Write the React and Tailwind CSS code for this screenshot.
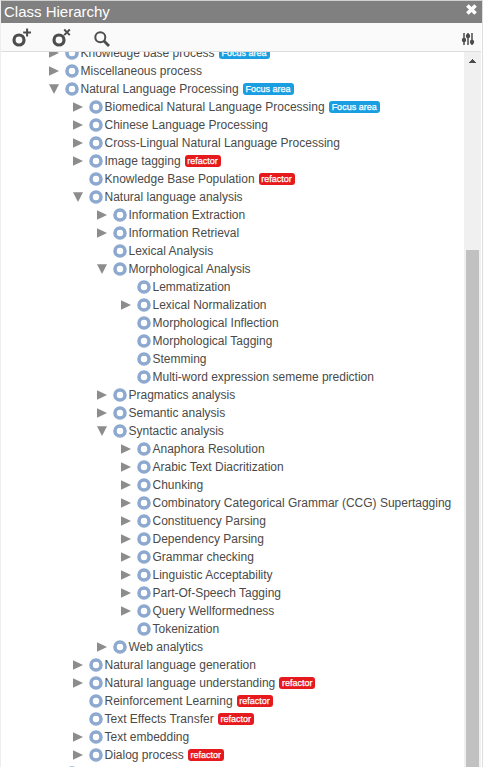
import React from "react";

const ROWS = [
  [0, "right", "Knowledge base process", "focus"],
  [0, "right", "Miscellaneous process"],
  [0, "down", "Natural Language Processing", "focus"],
  [1, "right", "Biomedical Natural Language Processing", "focus"],
  [1, "right", "Chinese Language Processing"],
  [1, "right", "Cross-Lingual Natural Language Processing"],
  [1, "right", "Image tagging", "refactor"],
  [1, "", "Knowledge Base Population", "refactor"],
  [1, "down", "Natural language analysis"],
  [2, "right", "Information Extraction"],
  [2, "right", "Information Retrieval"],
  [2, "", "Lexical Analysis"],
  [2, "down", "Morphological Analysis"],
  [3, "", "Lemmatization"],
  [3, "right", "Lexical Normalization"],
  [3, "", "Morphological Inflection"],
  [3, "", "Morphological Tagging"],
  [3, "", "Stemming"],
  [3, "", "Multi-word expression sememe prediction"],
  [2, "right", "Pragmatics analysis"],
  [2, "right", "Semantic analysis"],
  [2, "down", "Syntactic analysis"],
  [3, "right", "Anaphora Resolution"],
  [3, "right", "Arabic Text Diacritization"],
  [3, "right", "Chunking"],
  [3, "right", "Combinatory Categorical Grammar (CCG) Supertagging"],
  [3, "right", "Constituency Parsing"],
  [3, "right", "Dependency Parsing"],
  [3, "right", "Grammar checking"],
  [3, "right", "Linguistic Acceptability"],
  [3, "right", "Part-Of-Speech Tagging"],
  [3, "right", "Query Wellformedness"],
  [3, "", "Tokenization"],
  [2, "right", "Web analytics"],
  [1, "right", "Natural language generation"],
  [1, "right", "Natural language understanding", "refactor"],
  [1, "", "Reinforcement Learning", "refactor"],
  [1, "", "Text Effects Transfer", "refactor"],
  [1, "right", "Text embedding"],
  [1, "right", "Dialog process", "refactor"],
  [0, "", ""],
];

const INDENT = ["pl-[46px]", "pl-[70px]", "pl-[94px]", "pl-[118px]"];

function Tag({ kind }) {
  if (kind === "focus") {
    return (
      <span className="ml-1 flex h-3 w-[51px] items-center justify-center rounded-[3px] bg-[#1a9ee2] text-[9px] leading-3 text-white [-webkit-text-stroke:0.25px_white]">
        Focus area
      </span>
    );
  }
  return (
    <span className="ml-1 flex h-3 w-9 items-center justify-center rounded-[3px] bg-[#e6191c] text-[9px] leading-3 text-white [-webkit-text-stroke:0.25px_white]">
      refactor
    </span>
  );
}

function Row({ depth, arrow, label, tag }) {
  return (
    <div className={`flex h-[18px] shrink-0 items-center whitespace-nowrap ${INDENT[depth]}`}>
      <svg className="h-[18px] w-[15px] shrink-0" viewBox="0 0 15 18" fill="#8c8c8c">
        {arrow === "right" && <path d="M2 4.2L12 9L2 13.8Z" />}
        {arrow === "down" && <path d="M2 4.2H12L7 14Z" />}
      </svg>
      <svg className="ml-[3px] h-[14px] w-[14px] shrink-0" viewBox="0 0 14 14" fill="none">
        <circle cx="7" cy="7" r="5" stroke="#8ea9cf" strokeWidth="3.6" />
      </svg>
      <span className="ml-[1.5px]">{label}</span>
      {tag && <Tag kind={tag} />}
    </div>
  );
}

export default function App() {
  return (
    <div className="flex h-[767px] w-[483px] flex-col overflow-hidden border-t border-r border-l border-t-[#d0d0d0] border-r-[#dddddd] border-l-[#eeeeee] bg-white font-['Liberation_Sans',Arial,sans-serif] text-[12px] text-[#4a4a4a]">
      <header className="flex h-[22px] shrink-0 items-center justify-between bg-[#808080] pl-[3px] text-[15px] leading-[22px] text-white">
        <span>Class Hierarchy</span>
        <svg className="mr-[5px] mb-[5px] h-[11px] w-[11px]" viewBox="0 0 11 11" stroke="#fff" strokeWidth="3.6">
          <path d="M1.4 1.4L9.6 9.6M9.6 1.4L1.4 9.6" />
        </svg>
      </header>
      <div className="mr-px flex h-[29px] shrink-0 items-center border-b border-[#dddddd] bg-[#fafafa]">
        <svg className="ml-[10px] h-[24px] w-[22px]" viewBox="0 0 22 24" fill="none" stroke="#4d4d4d">
          <circle cx="8" cy="15" r="5" strokeWidth="3.2" />
          <path d="M12.2 7.5H20M16.1 3.6V11.4" strokeWidth="2" />
        </svg>
        <svg className="ml-[18px] h-[24px] w-[22px]" viewBox="0 0 22 24" fill="none" stroke="#4d4d4d">
          <circle cx="8" cy="15" r="5" strokeWidth="3.2" />
          <path d="M13.2 4.5L18.8 10.1M18.8 4.5L13.2 10.1" strokeWidth="2" />
        </svg>
        <svg className="mt-[3px] ml-[20px] h-[18px] w-[18px]" viewBox="0 0 18 18" fill="none" stroke="#4d4d4d">
          <circle cx="7.3" cy="7.3" r="5" strokeWidth="2" />
          <path d="M11 11L16 16" strokeWidth="2.8" />
        </svg>
        <svg className="mt-[3px] mr-[6px] ml-auto h-[14px] w-[14px]" viewBox="0 0 14 14" fill="#4d4d4d">
          <path d="M2 1H4V13H2ZM6 1H8V13H6ZM10 1H12V13H10Z" fill="#777777" />
          <circle cx="3" cy="8" r="2.2" />
          <circle cx="7" cy="4" r="2.2" />
          <circle cx="11" cy="10" r="2.2" />
        </svg>
      </div>
      <div className="mr-px flex min-h-0 flex-1">
        <div className="min-w-0 flex-1 overflow-hidden">
          <div className="-mt-2 flex flex-col">
            {ROWS.map(([depth, arrow, label, tag], i) => (
              <Row key={i} depth={depth} arrow={arrow} label={label} tag={tag} />
            ))}
          </div>
        </div>
        <div className="flex w-[17px] shrink-0 flex-col items-center bg-[#f0f0f0]">
          <svg className="mt-[7px] h-[4px] w-[7px] shrink-0" viewBox="0 0 7 4" fill="#4d4d4d" shapeRendering="crispEdges">
            <path d="M3 0H4V1H5V2H6V3H7V4H0V3H1V2H2V1H3Z" />
          </svg>
          <div className="mt-[187px] w-[13px] flex-1 bg-[#c1c1c1]" />
        </div>
      </div>
    </div>
  );
}
